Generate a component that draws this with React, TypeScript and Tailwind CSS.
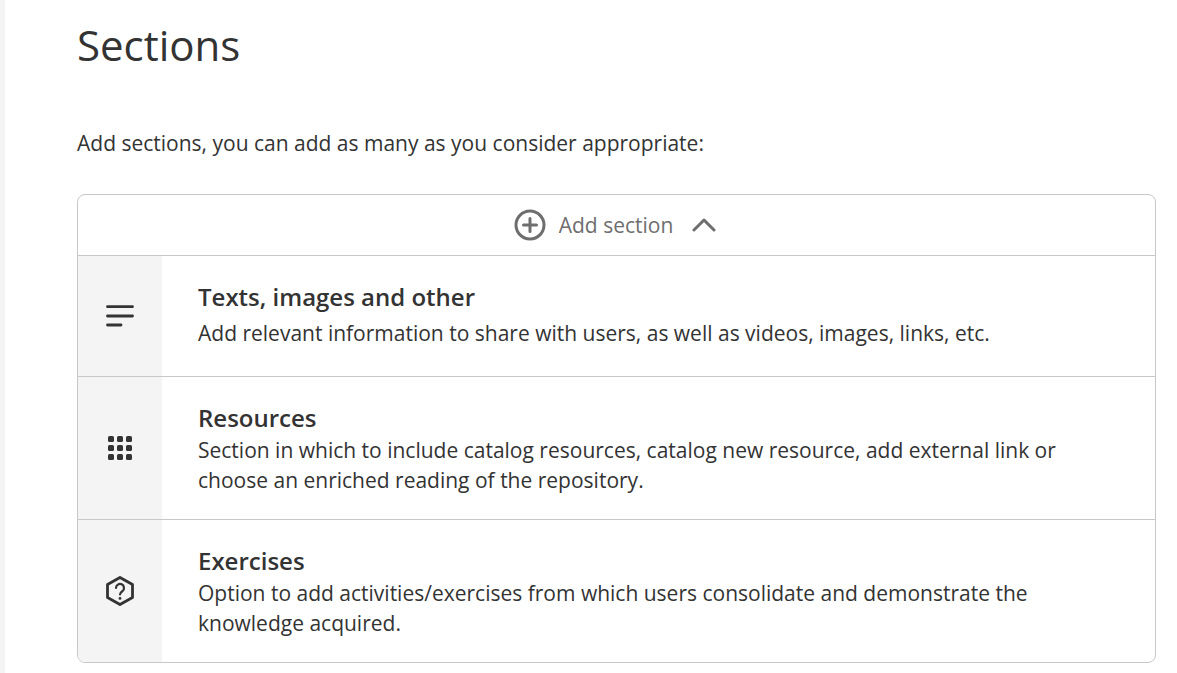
const FONT = { fontFamily: '"Open Sans", sans-serif' };

type Row = { title: string; lines: string[]; icon: JSX.Element; height: string; gap: string };

const rows: Row[] = [
  {
    title: "Texts, images and other",
    lines: ["Add relevant information to share with users, as well as videos, images, links, etc."],
    height: "h-[121px]",
    gap: "mt-[6px]",
    icon: (
      <svg width="28" height="24" viewBox="0 0 28 24" fill="none" stroke="#333" strokeWidth="2.8" strokeLinecap="round">
        <path d="M1.5 2.7H26.5M1.5 12H26.5M1.5 21H15" />
      </svg>
    ),
  },
  {
    title: "Resources",
    lines: [
      "Section in which to include catalog resources, catalog new resource, add external link or",
      "choose an enriched reading of the repository.",
    ],
    height: "h-[143px]",
    gap: "mt-[2px]",
    icon: (
      <svg width="24" height="24" viewBox="0 0 24 24" fill="#333">
        {[0, 9, 18].map((y) =>
          [0, 9, 18].map((x) => <rect key={`${x}-${y}`} x={x} y={y} width="6" height="6" rx="1.5" />),
        )}
      </svg>
    ),
  },
  {
    title: "Exercises",
    lines: [
      "Option to add activities/exercises from which users consolidate and demonstrate the",
      "knowledge acquired.",
    ],
    height: "h-[143px]",
    gap: "mt-[2px]",
    icon: (
      <svg width="28" height="30" viewBox="0 0 28 30" fill="none" stroke="#333" strokeWidth="2.8" strokeLinejoin="round" strokeLinecap="round">
        <path d="M14 1.5 26.5 8.5V21.5L14 28.5 1.5 21.5V8.5Z" />
        <path d="M10 12a4 4 0 1 1 6.5 3.1c-1.6 1.2-2.5 1.8-2.5 3.4" strokeWidth="2.2" />
        <circle cx="14" cy="22.4" r="1.4" fill="#333" stroke="none" />
      </svg>
    ),
  },
];

export default function App() {
  return (
    <div className="h-[673px] w-[1177px] overflow-hidden bg-white text-[#333]" style={FONT}>
      <div className="h-full border-l-[5px] border-[#f4f4f4] pl-[72px] pr-[21px]">
        <h1 className="pt-[18px] text-[42px] leading-[54px] font-normal text-[#333]">Sections</h1>
        <p className="mt-[56px] text-[21px] leading-[30px]">
          Add sections, you can add as many as you consider appropriate:
        </p>
        <div className="mt-[36px] overflow-hidden rounded-[8px] border border-[#c8c8c8]">
          <div className="flex h-[60px] items-center justify-center text-[#6e6e6e]">
            <svg width="32" height="32" viewBox="0 0 32 32" fill="none" stroke="#6e6e6e" strokeWidth="3" strokeLinecap="round">
              <circle cx="16" cy="16" r="14" />
              <path d="M16 9.5v13M9.5 16h13" />
            </svg>
            <span className="ml-[13px] text-[21px] leading-[30px]">Add section</span>
            <svg className="ml-[19px] mr-[3px]" width="24" height="16" viewBox="0 0 24 16" fill="none" stroke="#6e6e6e" strokeWidth="3" strokeLinecap="round" strokeLinejoin="round">
              <path d="M2 13 12 3l10 10" />
            </svg>
          </div>
          {rows.map((r) => (
            <div key={r.title} className={`flex border-t border-[#c8c8c8] ${r.height}`}>
              <div className="flex w-[84px] shrink-0 items-center justify-center bg-[#f4f4f4]">{r.icon}</div>
              <div className="pl-[36px] pt-[26px]">
                <h2 className="text-[24px] leading-[30px] font-semibold">{r.title}</h2>
                <p className={`${r.gap} text-[21px] leading-[30px]`}>
                  {r.lines.map((l) => (
                    <span key={l} className="block whitespace-nowrap">
                      {l}
                    </span>
                  ))}
                </p>
              </div>
            </div>
          ))}
        </div>
      </div>
    </div>
  );
}
